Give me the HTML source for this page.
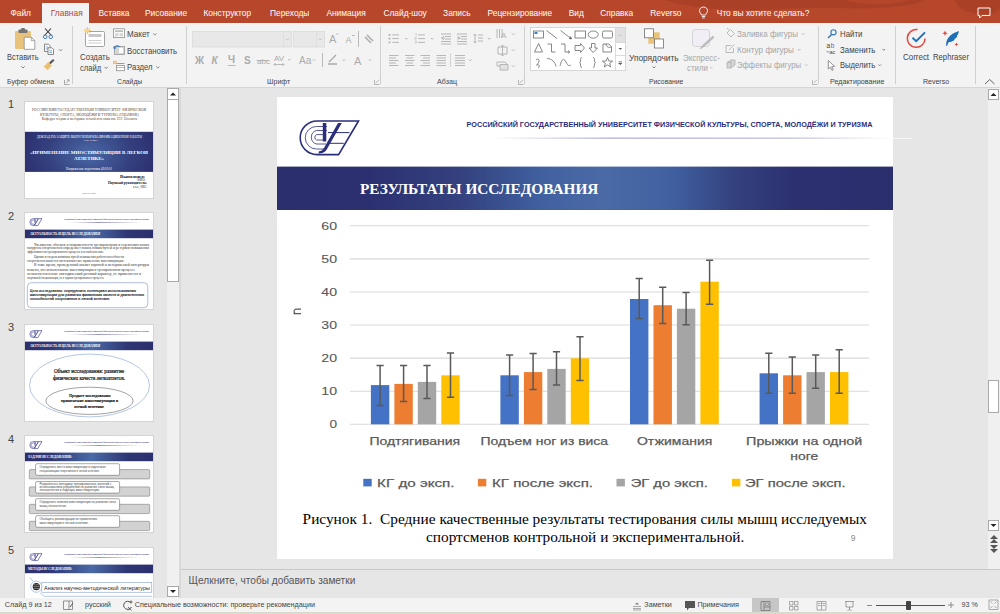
<!DOCTYPE html>
<html><head><meta charset="utf-8">
<style>
*{margin:0;padding:0;box-sizing:border-box}
html,body{width:1000px;height:614px;overflow:hidden;background:#e6e6e6;font-family:"Liberation Sans",sans-serif;position:relative}
.a{position:absolute;white-space:nowrap}
#tb{left:0;top:0;width:1000px;height:23px;background:#b7472a;overflow:hidden}
.tab{position:absolute;top:8px;font-size:8.4px;color:#fff;line-height:10px;white-space:nowrap}
#acttab{left:42px;top:3px;width:47px;height:21px;background:#f3f3f3}
#rbg{left:0;top:23px;width:1000px;height:65px;background:#f3f3f3;border-bottom:1px solid #d6d6d6}
#rb{left:0;top:0;width:1000px;height:88px}
.lbl{position:absolute;transform:scaleX(0.893);transform-origin:0 0;font-size:8.3px;color:#444;line-height:10px;white-space:nowrap}
.dis{color:#a6a6a6}
.sep{position:absolute;width:1px;background:#d4d4d4}
#thumbs{left:0;top:88px;width:167px;height:510px;overflow:hidden}
.th{box-shadow:0 0 0 1px #d4d4d4}
.thn{position:absolute;left:8px;font-size:11px;color:#444}
#slide{left:277px;top:97px;width:616px;height:462px;background:#fff;overflow:hidden}
#notes{left:181px;top:569px;width:819px;height:29px;border-top:1px solid #c8c8c8;background:#e6e6e6}
#sb{left:0;top:598px;width:1000px;height:16px;background:#f3f3f3}
.st{position:absolute;font-size:7.2px;color:#444;line-height:9px;white-space:nowrap}
</style></head><body>
<div id="rbg" class="a"></div>
<div id="tb" class="a">
<svg class="a" style="left:0;top:0" width="1000" height="23"><g fill="#9f3b24" opacity="0.5"><path d="M665 0 C690 8 730 12 780 9 C830 6 870 12 915 4 L925 0 Z"/><path d="M845 0 C860 5 890 6 910 0 Z" fill="#c05030" opacity="0.6"/><path d="M955 0 C958 8 965 14 985 14 C995 14 1000 10 1000 8 L1000 0 Z"/><path d="M600 23 C650 18 720 17 780 20 L790 23 Z" opacity="0.35"/></g></svg>
<div id="acttab" class="a"></div>
<div class="tab" style="left:10.4px">Файл</div>
<div class="tab" style="left:50.8px;color:#b7472a">Главная</div>
<div class="tab" style="left:98.4px">Вставка</div>
<div class="tab" style="left:145px">Рисование</div>
<div class="tab" style="left:203.4px">Конструктор</div>
<div class="tab" style="left:270px">Переходы</div>
<div class="tab" style="left:326.4px">Анимация</div>
<div class="tab" style="left:383.4px">Слайд-шоу</div>
<div class="tab" style="left:443.1px">Запись</div>
<div class="tab" style="left:487.5px">Рецензирование</div>
<div class="tab" style="left:568.7px">Вид</div>
<div class="tab" style="left:600.2px">Справка</div>
<div class="tab" style="left:650.3px">Reverso</div>
<svg class="a" style="left:698px;top:6px" width="11" height="13" viewBox="0 0 11 13"><path d="M5.5 1 C8 1 9.5 2.8 9.5 4.8 C9.5 6.5 8 7.5 7.5 9 L3.5 9 C3 7.5 1.5 6.5 1.5 4.8 C1.5 2.8 3 1 5.5 1 Z M3.8 10.5 H7.2 M4.3 12 H6.7" fill="none" stroke="#fff" stroke-width="0.9"/></svg>
<div class="tab" style="left:716.8px">Что вы хотите сделать?</div>
<svg class="a" style="left:977px;top:7px" width="14" height="12" viewBox="0 0 14 12"><path d="M1 1 H13 V8.5 H5 L2.5 11 V8.5 H1 Z" fill="none" stroke="#fff" stroke-width="1"/></svg>
</div>
<div id="rb" class="a">
<svg class="a" style="left:0;top:0" width="1000" height="88" viewBox="0 0 1000 88">
<g stroke="#d0d0d0" stroke-width="1"><path d="M72.5 26 V84 M186.5 26 V84 M380.5 26 V84 M524.5 26 V84 M818.5 26 V84 M895.5 26 V84 M975.5 26 V84"/></g>
<!-- paste -->
<rect x="15" y="31" width="16" height="18" rx="1.2" fill="#eac37b"/>
<rect x="18.5" y="29.5" width="9" height="3.5" rx="0.8" fill="#737373"/>
<rect x="21.2" y="28" width="3.6" height="2.5" rx="0.6" fill="#737373"/>
<path d="M24.2 37.2 H31.3 L34.8 40.7 V49.3 H24.2 Z" fill="#fff" stroke="#8a8a8a" stroke-width="0.8"/>
<path d="M31.3 37.2 V40.7 H34.8" fill="none" stroke="#8a8a8a" stroke-width="0.7"/>
<path d="M21.3 66.3 L23 68 L24.7 66.3" fill="none" stroke="#666" stroke-width="0.8"/>
<!-- scissors -->
<path d="M45 28.5 L51.5 35.5 M51 28.5 L44.5 35.5" stroke="#3a3a3a" stroke-width="1.1"/>
<circle cx="45.2" cy="36.8" r="1.8" fill="none" stroke="#3f7fc1" stroke-width="1"/>
<circle cx="50.8" cy="36.8" r="1.8" fill="none" stroke="#3f7fc1" stroke-width="1"/>
<!-- copy -->
<path d="M44.5 44.2 H48.5 L50 45.7 V51.5 H44.5 Z" fill="#fff" stroke="#6a6a6a" stroke-width="0.8"/>
<path d="M48 47.8 H52 L53.5 49.3 V54.5 H48 Z" fill="#fff" stroke="#6a6a6a" stroke-width="0.8"/>
<path d="M45.8 47 H48 M45.8 49 H48 M49.3 50.8 H52 M49.3 52.6 H52" stroke="#3f7fc1" stroke-width="0.7"/>
<path d="M59 49.3 L60.6 50.9 L62.2 49.3" fill="none" stroke="#666" stroke-width="0.8"/>
<!-- format painter -->
<path d="M43.6 66.5 L48.3 62 L52 65.7 L47.5 70.2 Z" fill="#eac37b"/>
<path d="M47 67.2 L49.5 64.7" stroke="#c9a060" stroke-width="0.6"/>
<path d="M49.8 63.4 L53.8 59.8" stroke="#5a5a5a" stroke-width="2.2"/>
<!-- launcher clipboard -->
<path d="M64.5 80 V84.5 H69.5 M66 82.8 L69 79.8 M67 79.8 H69 V81.8" fill="none" stroke="#8a8a8a" stroke-width="0.7"/>
<!-- new slide -->
<rect x="85.5" y="31.5" width="19" height="15" rx="1.2" fill="#fff" stroke="#9a9a9a" stroke-width="0.9"/>
<rect x="88.5" y="34" width="13" height="3" fill="#c8c8c8"/>
<path d="M88.5 40.5 H101.5 M88.5 43 H101.5" stroke="#b8b8b8" stroke-width="0.7"/>
<g stroke="#f0b945" stroke-width="0.9"><path d="M87.5 27.2 V34.2 M84 30.7 H91 M85 28.2 L90 33.2 M90 28.2 L85 33.2"/></g>
<circle cx="87.5" cy="30.7" r="1.8" fill="#f7d581"/>
<path d="M104.5 66.8 L106.2 68.5 L107.9 66.8" fill="none" stroke="#666" stroke-width="0.8"/>
<!-- layout -->
<rect x="113.5" y="28.8" width="11" height="8.8" fill="#fff" stroke="#8f8f8f" stroke-width="0.8"/>
<rect x="115" y="30.3" width="8" height="1.8" fill="#bdbdbd"/>
<rect x="115" y="33.3" width="3.5" height="3" fill="#d5d5d5"/><rect x="119.5" y="33.3" width="3.5" height="3" fill="#d5d5d5"/>
<path d="M153.2 33.5 L154.8 35.1 L156.4 33.5" fill="none" stroke="#666" stroke-width="0.8"/>
<!-- reset -->
<rect x="114.5" y="46.5" width="10" height="8" fill="#d6d6d6" stroke="#9a9a9a" stroke-width="0.8"/>
<rect x="119" y="48" width="4" height="5" fill="#fff"/>
<path d="M114 48.5 C115 45.5 118 45 119.5 47" fill="none" stroke="#3f7fc1" stroke-width="1.2"/>
<path d="M113 46.5 L114.2 49.5 L116.5 47.8 Z" fill="#3f7fc1"/>
<!-- section -->
<rect x="113.6" y="61.2" width="2.6" height="2.6" fill="#f5d39a" stroke="#e8a860" stroke-width="0.6"/>
<path d="M116.5 63.5 H124.5" stroke="#e8824a" stroke-width="1"/>
<rect x="116.5" y="65.5" width="8" height="5.2" fill="#fff" stroke="#8f8f8f" stroke-width="0.8"/>
<path d="M116.5 67.5 H124.5" stroke="#8f8f8f" stroke-width="0.6"/>
<path d="M156.2 66.5 L157.8 68.1 L159.4 66.5" fill="none" stroke="#666" stroke-width="0.8"/>
<!-- font group (disabled) -->
<rect x="192.5" y="31.5" width="99" height="15.5" fill="#e8e8e8" stroke="#dadada" stroke-width="0.8"/>
<path d="M283.5 31.5 V47" stroke="#dadada" stroke-width="0.8"/>
<path d="M286.2 38.7 L287.5 40 L288.8 38.7" fill="none" stroke="#b0b0b0" stroke-width="0.7"/>
<rect x="293.5" y="31.5" width="31" height="15.5" fill="#e8e8e8" stroke="#dadada" stroke-width="0.8"/>
<path d="M316.5 31.5 V47" stroke="#dadada" stroke-width="0.8"/>
<path d="M319 38.7 L320.3 40 L321.6 38.7" fill="none" stroke="#b0b0b0" stroke-width="0.7"/>
<g fill="#ababab" font-family="Liberation Sans" >
<text x="329" y="43" font-size="11">A</text><text x="336" y="37" font-size="5">^</text>
<text x="345.5" y="43" font-size="9">A</text><path d="M352 35.5 H355" stroke="#ababab" stroke-width="0.8"/>
<text x="195" y="64" font-size="10" font-weight="700">Ж</text>
<text x="211.5" y="64" font-size="10" font-weight="700" font-style="italic">К</text>
<text x="228" y="63" font-size="10" font-weight="700">Ч</text>
<text x="244" y="64" font-size="10" font-weight="700">S</text>
<text x="257" y="63.5" font-size="8">abc</text>
<text x="274" y="61" font-size="8">AV</text>
<text x="299" y="64" font-size="10">Aa</text>
<text x="354" y="64.5" font-size="11">A</text>
</g>
<g stroke="#ababab" fill="none" stroke-width="0.8">
<path d="M227.8 65.5 H235.5"/>
<path d="M256.5 60.5 H269"/>
<path d="M274 64.5 H284 M275.5 63 L274 64.5 L275.5 66 M282.5 63 L284 64.5 L282.5 66"/>
<path d="M288 59 L289.3 60.3 L290.6 59 M312.8 59.5 L314.1 60.8 L315.4 59.5 M342.7 59.5 L344 60.8 L345.3 59.5 M368.7 59.5 L370 60.8 L371.3 59.5"/>
<path d="M358.5 31 V47 M322.5 53 V67"/>
<path d="M365 37 L371 43 M367 35 L373 41" stroke-width="1.5"/>
<path d="M336 55 L329 62 M328 64 H337" stroke-width="1.4"/>
<path d="M374.5 80 V84.5 H379.5 M376 82.8 L379 79.8" stroke="#9a9a9a" stroke-width="0.7"/>
</g>
<!-- paragraph (disabled) -->
<g stroke="#b0b0b0" fill="none" stroke-width="0.9">
<path d="M392.3 34.9 H399 M392.3 38.6 H399 M392.3 42.4 H399"/><path d="M388.6 34 h1.8 v1.8 h-1.8 Z M388.6 37.7 h1.8 v1.8 h-1.8 Z M388.6 41.5 h1.8 v1.8 h-1.8 Z" fill="#b0b0b0" stroke="none"/>
<path d="M418.2 34.9 H425 M418.2 38.6 H425 M418.2 42.4 H425"/><path d="M415 33.8 h1.4 v1.8 M414.8 37.2 h1.6 v1 h-1.6 v1 h1.6 M414.8 41 h1.6 v1 h-1.2 M414.8 43 h1.6 v-1" stroke-width="0.5"/>
<path d="M441 34 H451 M445 36.5 H451 M445 39 H451 M441 41.5 H451 M441 44 H451 M441.5 38 L444 36 M441.5 38 L444 40 M441.5 38 H445"/>
<path d="M457 34 H467 M461 36.5 H467 M461 39 H467 M457 41.5 H467 M457 44 H467 M460 38 L457.5 36 M460 38 L457.5 40 M457 38 H460.5"/>
<path d="M478 35 H483 M478 38 H483 M478 41 H483 M475 34 V43 M473.5 35.5 L475 34 L476.5 35.5 M473.5 41.5 L475 43 L476.5 41.5"/>
<path d="M405 38 L406.3 39.3 L407.6 38 M431 38 L432.3 39.3 L433.6 38 M488 38 L489.3 39.3 L490.6 38"/>
<path d="M389 55.5 H398.5 M389 58 H396 M389 60.5 H398.5 M389 63 H396 M389 65.5 H398.5"/>
<path d="M405 55.5 H414.5 M406.5 58 H413 M405 60.5 H414.5 M406.5 63 H413 M405 65.5 H414.5"/>
<path d="M420.5 55.5 H430 M423 58 H430 M420.5 60.5 H430 M423 63 H430 M420.5 65.5 H430"/>
<path d="M436.5 55.5 H446 M436.5 58 H446 M436.5 60.5 H446 M436.5 63 H446 M436.5 65.5 H446"/>
<path d="M450.5 53 V67" stroke="#d0d0d0"/>
<path d="M455 55.5 H465 M455 58 H465 M455 60.5 H465 M455 63 H465 M455 65.5 H465"/>
<path d="M469 59.5 L470.3 60.8 L471.6 59.5"/>
<path d="M497 29 V38 M499.5 29 V38 M502 29 V38"/>
<path d="M498 47 H507 V54 H498 Z M502.5 45 V56 M501 46.5 L502.5 45 L504 46.5 M501 54.5 L502.5 56 L504 54.5"/>
<path d="M497 62 H505 L507 64 L505 66 H497 Z"/>
<path d="M500 64.5 H508 V70 H500 Z" fill="#e2e2e2"/>
<path d="M512 33.5 L513.3 34.8 L514.6 33.5 M512 49.5 L513.3 50.8 L514.6 49.5 M512 65.5 L513.3 66.8 L514.6 65.5"/>
<path d="M518.5 80 V84.5 H523.5 M520 82.8 L523 79.8" stroke="#9a9a9a" stroke-width="0.7"/>
</g>
<text x="501" y="38" font-size="8" fill="#b0b0b0" font-family="Liberation Sans">A</text>

<!-- drawing gallery -->
<rect x="530.5" y="27.5" width="95" height="43" fill="#fff" stroke="#d2d2d2" stroke-width="0.9"/>
<rect x="615.5" y="28" width="9.5" height="14.5" fill="#e1e1e1"/>
<path d="M615.5 27.5 V70.5 M615.5 42.5 H625.5 M615.5 55.5 H625.5" stroke="#d2d2d2" stroke-width="0.8"/>
<path d="M618.8 36 L620.3 34.5 L621.8 36 Z" fill="#c0c0c0"/>
<path d="M618.5 48 L620.3 49.8 L622.1 48 Z" fill="#555"/>
<path d="M618.5 61.5 H622.1 M618.5 63 L620.3 64.8 L622.1 63 Z" fill="#555" stroke="#555" stroke-width="0.5"/>
<g fill="none" stroke="#6a6a6a" stroke-width="0.8">
<rect x="533.5" y="31" width="10" height="7"/>
<path d="M546.5 30.5 L557 38.5 M560.5 30.5 L571 38.5"/>
<path d="M569 38.5 L571.5 39 L570.5 36.5" fill="#6a6a6a"/>
<rect x="575" y="31" width="10.5" height="7"/>
<ellipse cx="593.2" cy="34.6" rx="5" ry="3.6"/>
<rect x="602.5" y="31" width="10" height="7" rx="1.5"/>
<path d="M538.6 43.5 L534.5 52 H542.5 Z"/>
<path d="M547.5 44 H551.5 V52 H555.5"/>
<path d="M561 44 H565 V52 H569.5 M568 50.5 L569.8 52 L568 53.5"/>
<path d="M575 45.5 H580.5 V43.5 L584.5 48 L580.5 52.5 V50.5 H575 Z"/>
<path d="M591.5 43.5 H595 V48 H597.5 L593.2 52.5 L589 48 H591.5 Z"/>
<path d="M603 44 H609 L611.5 47 V52 H603 Z M606 44 C606 47 609 48 611.5 47"/>
<path d="M536 60 C540 57 540 63 536.5 65 C540 64 540 67 538 68"/>
<path d="M547 58.5 C552 58.5 555 62 556 66.5"/>
<path d="M560 66 C562 58 564 58 566 62 C568 66 569 66 571 65"/>
<path d="M582 57.5 C580.5 57.5 580.5 59 580.5 61 C580.5 62 580 62.5 579.5 62.5 C580 62.5 580.5 63 580.5 64 C580.5 66 580.5 67.5 582 67.5"/>
<path d="M593 57.5 C594.5 57.5 594.5 59 594.5 61 C594.5 62 595 62.5 595.5 62.5 C595 62.5 594.5 63 594.5 64 C594.5 66 594.5 67.5 593 67.5"/>
<path d="M607.5 57.5 L608.9 61 L612.6 61.1 L609.7 63.4 L610.7 67 L607.5 64.9 L604.3 67 L605.3 63.4 L602.4 61.1 L606.1 61 Z"/>
</g>
<rect x="534.5" y="32" width="3" height="2" fill="#3f7fc1"/>
<!-- arrange -->
<rect x="648.3" y="32.3" width="11.4" height="11.4" fill="#eac37b"/>
<rect x="644.5" y="28.8" width="9" height="9" fill="#fff" stroke="#707070" stroke-width="0.8"/>
<rect x="654.5" y="39" width="9" height="9" fill="#fff" stroke="#707070" stroke-width="0.8"/>
<path d="M652.5 66.5 L654 68 L655.5 66.5" fill="none" stroke="#666" stroke-width="0.8"/>
<!-- express styles -->
<rect x="692.5" y="29.5" width="17" height="17" rx="3" fill="#f2eef5" stroke="#cfcfcf" stroke-width="0.9"/>
<path d="M713 36 L703 45 L700 49 L704 46.5 L714 37.5 Z" fill="#bdbdbd" stroke="#a8a8a8" stroke-width="0.5"/>
<path d="M709.8 67 L711.1 68.3 L712.4 67" fill="none" stroke="#b0b0b0" stroke-width="0.7"/>
<!-- fill outline effects -->
<g fill="none" stroke="#b4b4b4" stroke-width="0.9">
<path d="M727 33 L730.5 29.5 L734.5 33.5 L731 37 Z M729 30 L727 28"/>
<path d="M726 45.5 H731.5 M726 45.5 V52.5 H733.5 V48 M729 50 L734.5 44.5"/>
<path d="M727 62.5 L731 60 H735 V65 L731 68 H727 Z M731 60 V68 M727 62.5 H731" fill="#d5d5d5"/>
<path d="M802 33.5 L803.3 34.8 L804.6 33.5 M798 49 L799.3 50.3 L800.6 49 M805 64.5 L806.3 65.8 L807.6 64.5"/>
<path d="M812.5 80 V84.5 H817.5 M814 82.8 L817 79.8" stroke="#9a9a9a" stroke-width="0.7"/>
</g>
<!-- find replace select -->
<circle cx="833.5" cy="32.3" r="2.6" fill="none" stroke="#2e75b6" stroke-width="1.1"/>
<path d="M831.6 34.4 L828 38" stroke="#2e75b6" stroke-width="1.4"/>
<text x="826.5" y="48" font-size="6.5" font-family="Liberation Sans" fill="#444">a</text>
<text x="830.8" y="47.5" font-size="6.5" font-family="Liberation Sans" fill="#7a5ab0">b</text>
<text x="829.5" y="53.5" font-size="5.5" font-family="Liberation Sans" fill="#444">ac</text>
<path d="M826.5 51 C827.5 52.5 828.5 52.5 829.5 51.5" fill="none" stroke="#2e75b6" stroke-width="0.7"/>
<path d="M828.3 60.5 V69 L830.4 67.2 L832 70.3 L833.2 69.7 L831.7 66.7 L834.6 66.3 Z" fill="#fff" stroke="#666" stroke-width="0.7"/>
<path d="M882.5 49 L883.8 50.3 L885.1 49 M878.5 64.5 L879.8 65.8 L881.1 64.5" fill="none" stroke="#666" stroke-width="0.8"/>
<!-- reverso -->
<path d="M917.5 29.6 A8.9 8.9 0 1 0 925.1 38.6" fill="none" stroke="#e1473d" stroke-width="1.5"/>
<path d="M912.5 37.8 L916.2 41.2 L925 32.3" fill="none" stroke="#1f6fb6" stroke-width="1.9"/>
<path d="M946.3 46 C945.5 41 948 34.5 958.8 31 C958.6 33 958 34.5 957 35.5 L957.3 36.2 C956.5 37.5 955.5 38.5 954.5 39 L954.6 39.8 C953 41.2 951 42 948.5 42.3 L947 46 Z" fill="#1f6fb6"/>
<path d="M945 30.5 L945.8 32.5 L947.8 33.3 L945.8 34.1 L945 36 L944.2 34.1 L942.2 33.3 L944.2 32.5 Z" fill="#e1473d"/>
<path d="M956.4 42.4 L957 43.8 L958.4 44.4 L957 45 L956.4 46.4 L955.8 45 L954.4 44.4 L955.8 43.8 Z" fill="#e1473d"/>
<path d="M985 84 L989.7 79.5 L994.5 84" fill="none" stroke="#555" stroke-width="0.9"/>
</svg>

<div class="lbl" style="left:7.4px;top:52.0px;font-size:8.34px">Вставить</div>
<div class="lbl" style="left:6.8px;top:77.0px;font-size:7.78px">Буфер обмена</div>
<div class="lbl" style="left:79.8px;top:52.0px;font-size:8.78px">Создать</div>
<div class="lbl" style="left:80.2px;top:62.5px;font-size:8.53px">слайд</div>
<div class="lbl" style="left:126.6px;top:29.0px;font-size:9.03px">Макет</div>
<div class="lbl" style="left:126.6px;top:45.8px;font-size:8.78px">Восстановить</div>
<div class="lbl" style="left:126.6px;top:62.0px;font-size:8.68px">Раздел</div>
<div class="lbl" style="left:116.8px;top:77.0px;font-size:7.58px">Слайды</div>
<div class="lbl" style="left:266.6px;top:77.0px;font-size:7.90px">Шрифт</div>
<div class="lbl" style="left:437px;top:77.0px;font-size:7.99px">Абзац</div>
<div class="lbl" style="left:629.4px;top:52.6px;font-size:9.34px">Упорядочить</div>
<div class="lbl dis" style="left:683px;top:52.6px;font-size:8.90px">Экспресс-</div>
<div class="lbl dis" style="left:687px;top:63.0px;font-size:8.85px">стили</div>
<div class="lbl" style="left:648.6px;top:77.0px;font-size:7.65px">Рисование</div>
<div class="lbl dis" style="left:737px;top:29.0px;font-size:8.95px">Заливка фигуры</div>
<div class="lbl dis" style="left:737px;top:44.6px;font-size:9.13px">Контур фигуры</div>
<div class="lbl dis" style="left:737px;top:60.0px;font-size:8.60px">Эффекты фигуры</div>
<div class="lbl" style="left:839.6px;top:29.0px;font-size:8.79px">Найти</div>
<div class="lbl" style="left:839.6px;top:44.6px;font-size:8.83px">Заменить</div>
<div class="lbl" style="left:839.6px;top:60.0px;font-size:8.59px">Выделить</div>
<div class="lbl" style="left:830px;top:77.0px;font-size:8.00px">Редактирование</div>
<div class="lbl" style="left:902.8px;top:52.0px;font-size:8.92px">Correct</div>
<div class="lbl" style="left:932.5px;top:52.0px;font-size:8.64px">Rephraser</div>
<div class="lbl" style="left:922.6px;top:77.0px;font-size:7.85px">Reverso</div>
</div>
<div id="thumbs" class="a">
<div class="thn" style="top:10.0px">1</div>
<div class="thn" style="top:121.5px">2</div>
<div class="thn" style="top:233.0px">3</div>
<div class="thn" style="top:344.5px">4</div>
<div class="thn" style="top:456.0px">5</div>
<svg class="a th" style="left:25px;top:13.7px" width="128" height="96" viewBox="0 0 128 96">
<defs><linearGradient id="tb0" x1="0" x2="1"><stop offset="0" stop-color="#2c2f6e"/><stop offset="0.2" stop-color="#2f3674"/><stop offset="0.52" stop-color="#4a6aa6"/><stop offset="0.8" stop-color="#2f3674"/><stop offset="1" stop-color="#2c2f6e"/></linearGradient><linearGradient id="thl0" x1="0" x2="1"><stop offset="0" stop-color="#6a6ab0" stop-opacity="0"/><stop offset="0.4" stop-color="#6a6ab0"/><stop offset="1" stop-color="#6a6ab0" stop-opacity="0"/></linearGradient></defs>
<rect x="0" y="0" width="128" height="96" fill="#fff"/>
<text x="7.00" y="9.40" font-family="Liberation Serif" font-size="3.4" font-weight="400" fill="#5b4a3a" opacity="1.0" textLength="114.00" lengthAdjust="spacingAndGlyphs">РОССИЙСКИЙ ГОСУДАРСТВЕННЫЙ УНИВЕРСИТЕТ ФИЗИЧЕСКОЙ</text>
<text x="15.00" y="13.50" font-family="Liberation Serif" font-size="3.4" font-weight="400" fill="#5b4a3a" opacity="1.0" textLength="98.60" lengthAdjust="spacingAndGlyphs">КУЛЬТУРЫ, СПОРТА, МОЛОДЁЖИ И ТУРИЗМА (ГЦОЛИФК)</text>
<text x="16.70" y="17.80" font-family="Liberation Serif" font-size="3.4" font-weight="400" fill="#5b4a3a" opacity="1.0" textLength="95.30" lengthAdjust="spacingAndGlyphs">Кафедра теории и методики легкой атлетики им. Н.Г. Озолина</text>
<defs><radialGradient id="rg0" cx="0.5" cy="0.55" r="0.55" gradientTransform="translate(0.5,0.55) scale(1,2.2) translate(-0.5,-0.55)"><stop offset="0" stop-color="#4a68a6"/><stop offset="0.6" stop-color="#34407e"/><stop offset="1" stop-color="#2c2f6e"/></radialGradient></defs>
<rect x="0" y="29.80" width="128" height="40.1" fill="url(#rg0)"/>
<text x="12.00" y="35.90" font-family="Liberation Serif" font-size="3" font-weight="400" fill="#fff" opacity="1.0" textLength="105.00" lengthAdjust="spacingAndGlyphs">ДОКЛАД ПО ЗАЩИТЕ ВЫПУСКНОЙ КВАЛИФИКАЦИОННОЙ РАБОТЫ</text>
<text x="59.00" y="39.30" font-family="Liberation Serif" font-size="2.8" font-weight="400" fill="#fff" opacity="1.0" textLength="14.00" lengthAdjust="spacingAndGlyphs">На тему:</text>
<text x="5.00" y="51.90" font-family="Liberation Serif" font-size="4.8" font-weight="700" fill="#fff" opacity="1.0" textLength="118.00" lengthAdjust="spacingAndGlyphs">«ПРИМЕНЕНИЕ МИОСТИМУЛЯЦИИ В ЛЕГКОЙ</text>
<text x="49.00" y="57.70" font-family="Liberation Serif" font-size="4.8" font-weight="700" fill="#fff" opacity="1.0" textLength="30.00" lengthAdjust="spacingAndGlyphs">АТЛЕТИКЕ»</text>
<text x="41.00" y="67.60" font-family="Liberation Serif" font-size="3" font-weight="400" fill="#fff" opacity="1.0" textLength="46.00" lengthAdjust="spacingAndGlyphs">Направление подготовки 49.03.01</text>
<text x="95.00" y="75.70" font-family="Liberation Serif" font-size="3.4" font-weight="700" fill="#111" opacity="1.0" textLength="25.00" lengthAdjust="spacingAndGlyphs">Выполнил:</text>
<text x="112.00" y="78.80" font-family="Liberation Serif" font-size="3" font-weight="400" fill="#333" opacity="1.0" textLength="8.00" lengthAdjust="spacingAndGlyphs">ФИО</text>
<text x="83.00" y="82.10" font-family="Liberation Serif" font-size="3.4" font-weight="700" fill="#111" opacity="1.0" textLength="39.00" lengthAdjust="spacingAndGlyphs">Научный руководитель:</text>
<text x="108.00" y="85.50" font-family="Liberation Serif" font-size="3" font-weight="400" fill="#333" opacity="1.0" textLength="13.00" lengthAdjust="spacingAndGlyphs">к.п.н., ФИО</text>
<text x="57.00" y="92.30" font-family="Liberation Serif" font-size="2.6" font-weight="400" fill="#777" opacity="1.0" textLength="14.00" lengthAdjust="spacingAndGlyphs">Москва 2022</text>
</svg>
<svg class="a th" style="left:25px;top:124.7px" width="128" height="96" viewBox="0 0 128 96">
<defs><linearGradient id="tb1" x1="0" x2="1"><stop offset="0" stop-color="#2c2f6e"/><stop offset="0.2" stop-color="#2f3674"/><stop offset="0.52" stop-color="#4a6aa6"/><stop offset="0.8" stop-color="#2f3674"/><stop offset="1" stop-color="#2c2f6e"/></linearGradient><linearGradient id="thl1" x1="0" x2="1"><stop offset="0" stop-color="#6a6ab0" stop-opacity="0"/><stop offset="0.4" stop-color="#6a6ab0"/><stop offset="1" stop-color="#6a6ab0" stop-opacity="0"/></linearGradient></defs>
<rect x="0" y="0" width="128" height="96" fill="#fff"/>
<g transform="translate(4.6,5.6) scale(0.2078)"><g transform="translate(-299,-121)"><g fill="none" stroke="#3b3e8a"><path d="M317 121 H358.5 L338.6 154.6 H317 A16.8 16.8 0 0 1 317 121 Z" stroke-width="3.2"/><path d="M327 128 H316.5 A10 10 0 0 0 316.5 148 H326" stroke-width="2.4"/></g><path d="M322.8 123 H327.3 V141.5 H322.8 Z M338 123 L342.8 123 L327 149 C325 152.5 322 153.5 318.5 153.5 L319 151.2 C321.5 151 323 150 324.3 147.5 Z" fill="#3b3e8a"/></g></g>
<text x="39.00" y="7.00" font-family="Liberation Sans" font-size="1.8" font-weight="700" fill="#2b2e7a" opacity="1.0" textLength="85.00" lengthAdjust="spacingAndGlyphs">РОССИЙСКИЙ ГОСУДАРСТВЕННЫЙ УНИВЕРСИТЕТ ФИЗИЧЕСКОЙ КУЛЬТУРЫ, СПОРТА, МОЛОДЁЖИ И ТУРИЗМА</text>
<rect x="45" y="9.0" width="72" height="0.7" fill="url(#thl1)"/>
<rect x="0" y="16.60" width="128" height="8.60" fill="url(#tb1)"/>
<text x="5.00" y="21.90" font-family="Liberation Serif" font-size="3.3" font-weight="700" fill="#fff" opacity="1.0" textLength="70.00" lengthAdjust="spacingAndGlyphs">АКТУАЛЬНОСТЬ И ЦЕЛЬ ИССЛЕДОВАНИЯ</text>
<text x="9.00" y="32.60" font-family="Liberation Serif" font-size="3.1" font-weight="400" fill="#555" opacity="1.0" stroke="#555" stroke-width="0.05" textLength="115.00" lengthAdjust="spacingAndGlyphs">Увеличение объемов и напряженности тренировочных и соревновательных</text>
<text x="2.00" y="36.40" font-family="Liberation Serif" font-size="3.1" font-weight="400" fill="#555" opacity="1.0" stroke="#555" stroke-width="0.05" textLength="122.00" lengthAdjust="spacingAndGlyphs">нагрузок спортсменов определяет поиск новых путей и резервов повышения</text>
<text x="2.00" y="40.30" font-family="Liberation Serif" font-size="3.1" font-weight="400" fill="#555" opacity="1.0" stroke="#555" stroke-width="0.05" textLength="77.00" lengthAdjust="spacingAndGlyphs">эффективности тренировочного процесса в легкой атлетике.</text>
<text x="9.00" y="45.40" font-family="Liberation Serif" font-size="3.1" font-weight="400" fill="#555" opacity="1.0" stroke="#555" stroke-width="0.05" textLength="90.00" lengthAdjust="spacingAndGlyphs">Одним из перспективных путей повышения работоспособности</text>
<text x="2.00" y="49.10" font-family="Liberation Serif" font-size="3.1" font-weight="400" fill="#555" opacity="1.0" stroke="#555" stroke-width="0.05" textLength="97.00" lengthAdjust="spacingAndGlyphs">спортсменов является систематическое применение миостимуляции.</text>
<text x="9.00" y="53.30" font-family="Liberation Serif" font-size="3.1" font-weight="400" fill="#555" opacity="1.0" stroke="#555" stroke-width="0.05" textLength="115.00" lengthAdjust="spacingAndGlyphs">В тоже время, проведенный анализ научной и методической литературы</text>
<text x="2.00" y="57.50" font-family="Liberation Serif" font-size="3.1" font-weight="400" fill="#555" opacity="1.0" stroke="#555" stroke-width="0.05" textLength="108.00" lengthAdjust="spacingAndGlyphs">показал, что использование миостимуляции в тренировочном процессе</text>
<text x="2.00" y="61.70" font-family="Liberation Serif" font-size="3.1" font-weight="400" fill="#555" opacity="1.0" stroke="#555" stroke-width="0.05" textLength="114.00" lengthAdjust="spacingAndGlyphs">легкоатлетов носит эпизодический разовый характер, не применяется в</text>
<text x="2.00" y="66.00" font-family="Liberation Serif" font-size="3.1" font-weight="400" fill="#555" opacity="1.0" stroke="#555" stroke-width="0.05" textLength="77.00" lengthAdjust="spacingAndGlyphs">спортивной специализации, не в задачах тренировочного процесса.</text>
<rect x="2.30" y="69.70" width="120.5" height="25" rx="4" fill="#fff" stroke="#7a90c0" stroke-width="0.6"/>
<text x="5.00" y="78.80" font-family="Liberation Sans" font-size="3.2" font-weight="700" fill="#111" opacity="1.0" textLength="33.00" lengthAdjust="spacingAndGlyphs">Цель исследования:</text>
<text x="39.00" y="78.80" font-family="Liberation Sans" font-size="3.2" font-weight="400" fill="#222" opacity="1.0" stroke="#222" stroke-width="0.12" textLength="72.00" lengthAdjust="spacingAndGlyphs">определить потенциал использования</text>
<text x="5.00" y="82.80" font-family="Liberation Sans" font-size="3.2" font-weight="400" fill="#222" opacity="1.0" stroke="#222" stroke-width="0.12" textLength="114.00" lengthAdjust="spacingAndGlyphs">миостимуляции для развития физических качеств и двигательных</text>
<text x="5.00" y="86.70" font-family="Liberation Sans" font-size="3.2" font-weight="400" fill="#222" opacity="1.0" stroke="#222" stroke-width="0.12" textLength="80.00" lengthAdjust="spacingAndGlyphs">способностей спортсменов в легкой атлетике.</text>
</svg>
<svg class="a th" style="left:25px;top:236.7px" width="128" height="96" viewBox="0 0 128 96">
<defs><linearGradient id="tb2" x1="0" x2="1"><stop offset="0" stop-color="#2c2f6e"/><stop offset="0.2" stop-color="#2f3674"/><stop offset="0.52" stop-color="#4a6aa6"/><stop offset="0.8" stop-color="#2f3674"/><stop offset="1" stop-color="#2c2f6e"/></linearGradient><linearGradient id="thl2" x1="0" x2="1"><stop offset="0" stop-color="#6a6ab0" stop-opacity="0"/><stop offset="0.4" stop-color="#6a6ab0"/><stop offset="1" stop-color="#6a6ab0" stop-opacity="0"/></linearGradient></defs>
<rect x="0" y="0" width="128" height="96" fill="#fff"/>
<g transform="translate(4.6,5.6) scale(0.2078)"><g transform="translate(-299,-121)"><g fill="none" stroke="#3b3e8a"><path d="M317 121 H358.5 L338.6 154.6 H317 A16.8 16.8 0 0 1 317 121 Z" stroke-width="3.2"/><path d="M327 128 H316.5 A10 10 0 0 0 316.5 148 H326" stroke-width="2.4"/></g><path d="M322.8 123 H327.3 V141.5 H322.8 Z M338 123 L342.8 123 L327 149 C325 152.5 322 153.5 318.5 153.5 L319 151.2 C321.5 151 323 150 324.3 147.5 Z" fill="#3b3e8a"/></g></g>
<text x="39.00" y="7.00" font-family="Liberation Sans" font-size="1.8" font-weight="700" fill="#2b2e7a" opacity="1.0" textLength="85.00" lengthAdjust="spacingAndGlyphs">РОССИЙСКИЙ ГОСУДАРСТВЕННЫЙ УНИВЕРСИТЕТ ФИЗИЧЕСКОЙ КУЛЬТУРЫ, СПОРТА, МОЛОДЁЖИ И ТУРИЗМА</text>
<rect x="45" y="9.0" width="72" height="0.7" fill="url(#thl2)"/>
<rect x="0" y="16.60" width="128" height="8.60" fill="url(#tb2)"/>
<text x="5.00" y="21.90" font-family="Liberation Serif" font-size="3.3" font-weight="700" fill="#fff" opacity="1.0" textLength="70.00" lengthAdjust="spacingAndGlyphs">АКТУАЛЬНОСТЬ И ЦЕЛЬ ИССЛЕДОВАНИЯ</text>
<ellipse cx="64.5" cy="60.50" rx="60" ry="31.4" fill="#fff" stroke="#6b8cc8" stroke-width="0.5"/>
<text x="29.00" y="47.80" font-family="Liberation Serif" font-size="5.4" font-weight="400" fill="#111" opacity="1.0" stroke="#111" stroke-width="0.2" textLength="70.00" lengthAdjust="spacingAndGlyphs">Объект исследования: развитие</text>
<text x="28.00" y="54.60" font-family="Liberation Serif" font-size="5.4" font-weight="400" fill="#111" opacity="1.0" stroke="#111" stroke-width="0.2" textLength="72.00" lengthAdjust="spacingAndGlyphs">физических качеств легкоатлетов.</text>
<ellipse cx="64.5" cy="75.80" rx="43.6" ry="13.6" fill="#fff" stroke="#444" stroke-width="0.5"/>
<text x="44.00" y="72.00" font-family="Liberation Serif" font-size="4.8" font-weight="400" fill="#111" opacity="1.0" stroke="#111" stroke-width="0.2" textLength="42.00" lengthAdjust="spacingAndGlyphs">Предмет исследования:</text>
<text x="36.00" y="77.30" font-family="Liberation Serif" font-size="4.8" font-weight="400" fill="#111" opacity="1.0" stroke="#111" stroke-width="0.2" textLength="57.00" lengthAdjust="spacingAndGlyphs">применение миостимуляции в</text>
<text x="49.00" y="82.50" font-family="Liberation Serif" font-size="4.8" font-weight="400" fill="#111" opacity="1.0" stroke="#111" stroke-width="0.2" textLength="30.00" lengthAdjust="spacingAndGlyphs">легкой атлетике</text>
</svg>
<svg class="a th" style="left:25px;top:347.7px" width="128" height="96" viewBox="0 0 128 96">
<defs><linearGradient id="tb3" x1="0" x2="1"><stop offset="0" stop-color="#2c2f6e"/><stop offset="0.2" stop-color="#2f3674"/><stop offset="0.52" stop-color="#4a6aa6"/><stop offset="0.8" stop-color="#2f3674"/><stop offset="1" stop-color="#2c2f6e"/></linearGradient><linearGradient id="thl3" x1="0" x2="1"><stop offset="0" stop-color="#6a6ab0" stop-opacity="0"/><stop offset="0.4" stop-color="#6a6ab0"/><stop offset="1" stop-color="#6a6ab0" stop-opacity="0"/></linearGradient></defs>
<rect x="0" y="0" width="128" height="96" fill="#fff"/>
<g transform="translate(4.6,5.6) scale(0.2078)"><g transform="translate(-299,-121)"><g fill="none" stroke="#3b3e8a"><path d="M317 121 H358.5 L338.6 154.6 H317 A16.8 16.8 0 0 1 317 121 Z" stroke-width="3.2"/><path d="M327 128 H316.5 A10 10 0 0 0 316.5 148 H326" stroke-width="2.4"/></g><path d="M322.8 123 H327.3 V141.5 H322.8 Z M338 123 L342.8 123 L327 149 C325 152.5 322 153.5 318.5 153.5 L319 151.2 C321.5 151 323 150 324.3 147.5 Z" fill="#3b3e8a"/></g></g>
<text x="39.00" y="7.00" font-family="Liberation Sans" font-size="1.8" font-weight="700" fill="#2b2e7a" opacity="1.0" textLength="85.00" lengthAdjust="spacingAndGlyphs">РОССИЙСКИЙ ГОСУДАРСТВЕННЫЙ УНИВЕРСИТЕТ ФИЗИЧЕСКОЙ КУЛЬТУРЫ, СПОРТА, МОЛОДЁЖИ И ТУРИЗМА</text>
<rect x="45" y="9.0" width="72" height="0.7" fill="url(#thl3)"/>
<rect x="0" y="16.60" width="128" height="8.60" fill="url(#tb3)"/>
<text x="3.00" y="21.90" font-family="Liberation Serif" font-size="3.3" font-weight="700" fill="#fff" opacity="1.0" textLength="44.00" lengthAdjust="spacingAndGlyphs">ЗАДАЧИ ИССЛЕДОВАНИЯ:</text>
<rect x="4.30" y="33.60" width="120.4" height="9.3" rx="1" fill="#d2d2d2" stroke="#6a6a6a" stroke-width="0.5"/>
<rect x="10.60" y="27.70" width="84" height="11.6" rx="1.5" fill="#fff" stroke="#555" stroke-width="0.5"/>
<text x="14.50" y="32.30" font-family="Liberation Sans" font-size="2.6" font-weight="400" fill="#444" opacity="1.0" textLength="66.10" lengthAdjust="spacingAndGlyphs">Определить место миостимуляции в подготовке</text>
<text x="14.50" y="35.90" font-family="Liberation Sans" font-size="2.6" font-weight="400" fill="#444" opacity="1.0" textLength="60.20" lengthAdjust="spacingAndGlyphs">специализации спортсменов в легкой атлетике.</text>
<rect x="4.30" y="50.90" width="120.4" height="9.3" rx="1" fill="#d2d2d2" stroke="#6a6a6a" stroke-width="0.5"/>
<rect x="10.60" y="45.50" width="84" height="11.6" rx="1.5" fill="#fff" stroke="#555" stroke-width="0.5"/>
<text x="14.50" y="49.10" font-family="Liberation Sans" font-size="2.6" font-weight="400" fill="#444" opacity="1.0" textLength="72.00" lengthAdjust="spacingAndGlyphs">Разработать методику тренировочных занятий с</text>
<text x="14.50" y="52.10" font-family="Liberation Sans" font-size="2.6" font-weight="400" fill="#444" opacity="1.0" textLength="74.50" lengthAdjust="spacingAndGlyphs">использованием упражнений на развитие силы мышц</text>
<text x="14.50" y="55.10" font-family="Liberation Sans" font-size="2.6" font-weight="400" fill="#444" opacity="1.0" textLength="60.20" lengthAdjust="spacingAndGlyphs">легкоатлетов и подбора миостимуляции.</text>
<rect x="4.30" y="68.30" width="120.4" height="9.3" rx="1" fill="#d2d2d2" stroke="#6a6a6a" stroke-width="0.5"/>
<rect x="10.60" y="62.70" width="84" height="11.6" rx="1.5" fill="#fff" stroke="#555" stroke-width="0.5"/>
<text x="14.50" y="67.30" font-family="Liberation Sans" font-size="2.6" font-weight="400" fill="#444" opacity="1.0" textLength="76.30" lengthAdjust="spacingAndGlyphs">Определить влияние миостимуляции на развитие силы</text>
<text x="14.50" y="70.90" font-family="Liberation Sans" font-size="2.6" font-weight="400" fill="#444" opacity="1.0" textLength="27.10" lengthAdjust="spacingAndGlyphs">мышц легкоатлетов.</text>
<rect x="4.30" y="85.30" width="120.4" height="9.3" rx="1" fill="#d2d2d2" stroke="#6a6a6a" stroke-width="0.5"/>
<rect x="10.60" y="79.70" width="84" height="11.6" rx="1.5" fill="#fff" stroke="#555" stroke-width="0.5"/>
<text x="14.50" y="84.30" font-family="Liberation Sans" font-size="2.6" font-weight="400" fill="#444" opacity="1.0" textLength="57.50" lengthAdjust="spacingAndGlyphs">Обобщить рекомендации по применению</text>
<text x="14.50" y="87.90" font-family="Liberation Sans" font-size="2.6" font-weight="400" fill="#444" opacity="1.0" textLength="49.10" lengthAdjust="spacingAndGlyphs">миостимуляции в легкой атлетике.</text>
</svg>
<svg class="a th" style="left:25px;top:459.7px" width="128" height="96" viewBox="0 0 128 96">
<defs><linearGradient id="tb4" x1="0" x2="1"><stop offset="0" stop-color="#2c2f6e"/><stop offset="0.2" stop-color="#2f3674"/><stop offset="0.52" stop-color="#4a6aa6"/><stop offset="0.8" stop-color="#2f3674"/><stop offset="1" stop-color="#2c2f6e"/></linearGradient><linearGradient id="thl4" x1="0" x2="1"><stop offset="0" stop-color="#6a6ab0" stop-opacity="0"/><stop offset="0.4" stop-color="#6a6ab0"/><stop offset="1" stop-color="#6a6ab0" stop-opacity="0"/></linearGradient></defs>
<rect x="0" y="0" width="128" height="96" fill="#fff"/>
<g transform="translate(4.6,5.6) scale(0.2078)"><g transform="translate(-299,-121)"><g fill="none" stroke="#3b3e8a"><path d="M317 121 H358.5 L338.6 154.6 H317 A16.8 16.8 0 0 1 317 121 Z" stroke-width="3.2"/><path d="M327 128 H316.5 A10 10 0 0 0 316.5 148 H326" stroke-width="2.4"/></g><path d="M322.8 123 H327.3 V141.5 H322.8 Z M338 123 L342.8 123 L327 149 C325 152.5 322 153.5 318.5 153.5 L319 151.2 C321.5 151 323 150 324.3 147.5 Z" fill="#3b3e8a"/></g></g>
<text x="39.00" y="7.00" font-family="Liberation Sans" font-size="1.8" font-weight="700" fill="#2b2e7a" opacity="1.0" textLength="85.00" lengthAdjust="spacingAndGlyphs">РОССИЙСКИЙ ГОСУДАРСТВЕННЫЙ УНИВЕРСИТЕТ ФИЗИЧЕСКОЙ КУЛЬТУРЫ, СПОРТА, МОЛОДЁЖИ И ТУРИЗМА</text>
<rect x="45" y="9.0" width="72" height="0.7" fill="url(#thl4)"/>
<rect x="0" y="16.60" width="128" height="8.60" fill="url(#tb4)"/>
<text x="3.00" y="21.90" font-family="Liberation Serif" font-size="3.3" font-weight="700" fill="#fff" opacity="1.0" textLength="44.00" lengthAdjust="spacingAndGlyphs">МЕТОДЫ ИССЛЕДОВАНИЯ:</text>
<rect x="16.80" y="34.50" width="110" height="9.7" fill="#fff" stroke="#6b8cc8" stroke-width="0.5"/>
<circle cx="11.30" cy="38.70" r="5.6" fill="#fff" stroke="#6b8cc8" stroke-width="0.5"/>
<circle cx="11.30" cy="38.70" r="3.6" fill="#222"/>
<path d="M8.5 36.799999999999955 h5.6 M8.299999999999997 38.69999999999993 h6 M8.5 40.59999999999991 h5.6" stroke="#ddd" stroke-width="0.5"/>
<text x="19.00" y="41.60" font-family="Liberation Sans" font-size="6" font-weight="400" fill="#222" opacity="1.0" textLength="106.00" lengthAdjust="spacingAndGlyphs">Анализ научно-методической литературы</text>
<path d="M5 29.299999999999955 L8 33.299999999999955 M15 44.799999999999955 L19 48.299999999999955 H127" stroke="#6b8cc8" stroke-width="0.5" fill="none"/>
</svg>
</div>
<div id="slide" class="a">
<svg class="a" style="left:0;top:0" width="616" height="462" viewBox="0 0 616 462">
<defs><linearGradient id="band" x1="0" y1="0" x2="1" y2="0"><stop offset="0" stop-color="#2c2f6e"/><stop offset="0.15" stop-color="#2c3070"/><stop offset="0.3" stop-color="#34427f"/><stop offset="0.43" stop-color="#4060a0"/><stop offset="0.53" stop-color="#4a6aa6"/><stop offset="0.64" stop-color="#4060a0"/><stop offset="0.74" stop-color="#34427f"/><stop offset="0.84" stop-color="#2c3070"/><stop offset="1" stop-color="#2c2f6e"/></linearGradient>
<linearGradient id="hl" x1="0" y1="0" x2="1" y2="0"><stop offset="0" stop-color="#6a6ab0" stop-opacity="0"/><stop offset="0.3" stop-color="#6a6ab0" stop-opacity="0.85"/><stop offset="0.75" stop-color="#6a6ab0" stop-opacity="0.7"/><stop offset="1" stop-color="#6a6ab0" stop-opacity="0"/></linearGradient></defs>
<g transform="translate(-277,-97)">
<g fill="none" stroke="#2b2e7a">
<path d="M317 121 H358.5 L338.6 154.6 H317 A16.8 16.8 0 0 1 317 121 Z" stroke-width="1.6"/>
<path d="M327 126.5 H316.5 A11.2 11.2 0 0 0 316.5 149 H326" stroke-width="0.8"/>
<path d="M327 130.5 H316.5 A7 7 0 0 0 316.5 144 H326" stroke-width="0.8"/>
<path d="M325 134.6 H316.5 A3 3 0 0 0 316.5 140 H325" stroke-width="0.8"/>
<path d="M328 132.6 H349.5 M327 143.3 H343.8" stroke-width="1"/>
</g>
<path d="M322.8 123 H326.3 V141.5 H322.8 Z" fill="#2b2e7a"/>
<path d="M338 123 L341.8 123 L327 149 C325 152.5 322 153.5 318.5 153.5 L319 151.2 C321.5 151 323 150 324.3 147.5 Z" fill="#2b2e7a"/>
</g>
<text x="189.6" y="30.3" font-family="Liberation Sans" font-weight="700" font-size="7.4" fill="#2b2e7a" textLength="405.8" lengthAdjust="spacingAndGlyphs">РОССИЙСКИЙ ГОСУДАРСТВЕННЫЙ УНИВЕРСИТЕТ ФИЗИЧЕСКОЙ КУЛЬТУРЫ, СПОРТА, МОЛОДЁЖИ И ТУРИЗМА</text>
<rect x="213" y="40.7" width="400" height="0.8" fill="url(#hl)"/>
<rect x="0" y="69.6" width="616" height="43.4" fill="url(#band)"/>
<text x="83" y="97.2" font-family="Liberation Serif" font-weight="700" font-size="15.4" fill="#fff" textLength="238.4" lengthAdjust="spacingAndGlyphs">РЕЗУЛЬТАТЫ ИССЛЕДОВАНИЯ</text>
<path d="M73 327.30 H592 M73 294.22 H592 M73 261.14 H592 M73 228.06 H592 M73 194.98 H592 M73 161.90 H592 M73 128.82 H592" stroke="#d9d9d9" stroke-width="1.1" fill="none"/>
<text x="60" y="331.40" text-anchor="end" font-family="Liberation Sans" font-size="11" fill="#595959" stroke="#595959" stroke-width="0.1" textLength="7.6" lengthAdjust="spacingAndGlyphs">0</text>
<text x="60" y="298.32" text-anchor="end" font-family="Liberation Sans" font-size="11" fill="#595959" stroke="#595959" stroke-width="0.1" textLength="15.7" lengthAdjust="spacingAndGlyphs">10</text>
<text x="60" y="265.24" text-anchor="end" font-family="Liberation Sans" font-size="11" fill="#595959" stroke="#595959" stroke-width="0.1" textLength="15.7" lengthAdjust="spacingAndGlyphs">20</text>
<text x="60" y="232.16" text-anchor="end" font-family="Liberation Sans" font-size="11" fill="#595959" stroke="#595959" stroke-width="0.1" textLength="15.7" lengthAdjust="spacingAndGlyphs">30</text>
<text x="60" y="199.08" text-anchor="end" font-family="Liberation Sans" font-size="11" fill="#595959" stroke="#595959" stroke-width="0.1" textLength="15.7" lengthAdjust="spacingAndGlyphs">40</text>
<text x="60" y="166.00" text-anchor="end" font-family="Liberation Sans" font-size="11" fill="#595959" stroke="#595959" stroke-width="0.1" textLength="15.7" lengthAdjust="spacingAndGlyphs">50</text>
<text x="60" y="132.92" text-anchor="end" font-family="Liberation Sans" font-size="11" fill="#595959" stroke="#595959" stroke-width="0.1" textLength="15.7" lengthAdjust="spacingAndGlyphs">60</text>
<path d="M24 212.2 H18.5 A2.4 2.4 0 0 0 18.5 216.6 M24 216.6 H16.5" fill="none" stroke="#595959" stroke-width="1.2" transform="translate(0,0)"/>
<rect x="93.90" y="288.10" width="18.4" height="39.20" fill="#4472c4"/>
<rect x="117.40" y="286.90" width="18.4" height="40.40" fill="#ed7d31"/>
<rect x="140.80" y="284.90" width="18.4" height="42.40" fill="#a5a5a5"/>
<rect x="164.30" y="278.30" width="18.4" height="49.00" fill="#ffc000"/>
<rect x="223.40" y="278.30" width="18.4" height="49.00" fill="#4472c4"/>
<rect x="246.90" y="275.10" width="18.4" height="52.20" fill="#ed7d31"/>
<rect x="270.30" y="271.90" width="18.4" height="55.40" fill="#a5a5a5"/>
<rect x="293.80" y="261.30" width="18.4" height="66.00" fill="#ffc000"/>
<rect x="353.00" y="202.00" width="18.4" height="125.30" fill="#4472c4"/>
<rect x="376.50" y="208.20" width="18.4" height="119.10" fill="#ed7d31"/>
<rect x="399.90" y="211.70" width="18.4" height="115.60" fill="#a5a5a5"/>
<rect x="423.40" y="184.70" width="18.4" height="142.60" fill="#ffc000"/>
<rect x="482.60" y="276.30" width="18.4" height="51.00" fill="#4472c4"/>
<rect x="506.10" y="278.30" width="18.4" height="49.00" fill="#ed7d31"/>
<rect x="529.50" y="275.10" width="18.4" height="52.20" fill="#a5a5a5"/>
<rect x="553.00" y="275.10" width="18.4" height="52.20" fill="#ffc000"/>
<path d="M103.10 268.40 V308.40 M99.50 268.40 H106.70 M99.50 308.40 H106.70 M126.60 268.40 V304.40 M123.00 268.40 H130.20 M123.00 304.40 H130.20 M150.00 268.40 V301.50 M146.40 268.40 H153.60 M146.40 301.50 H153.60 M173.50 255.90 V300.30 M169.90 255.90 H177.10 M169.90 300.30 H177.10 M232.60 258.00 V298.40 M229.00 258.00 H236.20 M229.00 298.40 H236.20 M256.10 256.60 V292.40 M252.50 256.60 H259.70 M252.50 292.40 H259.70 M279.50 254.80 V288.00 M275.90 254.80 H283.10 M275.90 288.00 H283.10 M303.00 239.80 V283.50 M299.40 239.80 H306.60 M299.40 283.50 H306.60 M362.20 181.50 V221.40 M358.60 181.50 H365.80 M358.60 221.40 H365.80 M385.70 190.30 V226.40 M382.10 190.30 H389.30 M382.10 226.40 H389.30 M409.10 195.50 V227.80 M405.50 195.50 H412.70 M405.50 227.80 H412.70 M432.60 163.30 V207.30 M429.00 163.30 H436.20 M429.00 207.30 H436.20 M491.80 256.30 V296.20 M488.20 256.30 H495.40 M488.20 296.20 H495.40 M515.30 259.90 V296.20 M511.70 259.90 H518.90 M511.70 296.20 H518.90 M538.70 258.00 V291.20 M535.10 258.00 H542.30 M535.10 291.20 H542.30 M562.20 252.70 V296.20 M558.60 252.70 H565.80 M558.60 296.20 H565.80" stroke="#595959" stroke-width="1.5" fill="none"/>
<text x="92.4" y="347.5" font-family="Liberation Sans" font-size="11.2" fill="#595959" stroke="#595959" stroke-width="0.25" textLength="90.7" lengthAdjust="spacingAndGlyphs">Подтягивания</text>
<text x="203.5" y="347.5" font-family="Liberation Sans" font-size="11.2" fill="#595959" stroke="#595959" stroke-width="0.25" textLength="127.6" lengthAdjust="spacingAndGlyphs">Подъем ног из виса</text>
<text x="359.9" y="347.5" font-family="Liberation Sans" font-size="11.2" fill="#595959" stroke="#595959" stroke-width="0.25" textLength="75.4" lengthAdjust="spacingAndGlyphs">Отжимания</text>
<text x="469.1" y="347.5" font-family="Liberation Sans" font-size="11.2" fill="#595959" stroke="#595959" stroke-width="0.25" textLength="116.2" lengthAdjust="spacingAndGlyphs">Прыжки на одной</text>
<text x="513.3" y="362.5" font-family="Liberation Sans" font-size="11.2" fill="#595959" stroke="#595959" stroke-width="0.25" textLength="27.8" lengthAdjust="spacingAndGlyphs">ноге</text>
<rect x="86.3" y="381.8" width="8.4" height="7.6" fill="#4472c4"/>
<text x="100.1" y="389.5" font-family="Liberation Sans" font-size="11.8" fill="#595959" stroke="#595959" stroke-width="0.25" textLength="77.4" lengthAdjust="spacingAndGlyphs">КГ до эксп.</text>
<rect x="200.9" y="381.8" width="8.4" height="7.6" fill="#ed7d31"/>
<text x="215" y="389.5" font-family="Liberation Sans" font-size="11.8" fill="#595959" stroke="#595959" stroke-width="0.25" textLength="101" lengthAdjust="spacingAndGlyphs">КГ после эксп.</text>
<rect x="339.5" y="381.8" width="8.4" height="7.6" fill="#a5a5a5"/>
<text x="353.7" y="389.5" font-family="Liberation Sans" font-size="11.8" fill="#595959" stroke="#595959" stroke-width="0.25" textLength="77.2" lengthAdjust="spacingAndGlyphs">ЭГ до эксп.</text>
<rect x="455" y="381.8" width="8.4" height="7.6" fill="#ffc000"/>
<text x="468" y="389.5" font-family="Liberation Sans" font-size="11.8" fill="#595959" stroke="#595959" stroke-width="0.25" textLength="100.7" lengthAdjust="spacingAndGlyphs">ЭГ после эксп.</text>
<text x="25.6" y="427.2" font-family="Liberation Serif" font-size="15.3" fill="#000" textLength="564.4" lengthAdjust="spacingAndGlyphs" xml:space="preserve">Рисунок 1.  Средние качественные результаты тестирования силы мышц исследуемых</text>
<text x="149" y="445.2" font-family="Liberation Serif" font-size="15.3" fill="#000" textLength="318.4" lengthAdjust="spacingAndGlyphs">спортсменов контрольной и экспериментальной.</text>
<text x="573.8" y="444" font-family="Liberation Sans" font-size="8.6" fill="#8c8c8c">9</text>
</svg>
</div>
<div class="a" style="left:167px;top:88px;width:12px;height:510px;background:#f0f0f0"></div>
<div class="a" style="left:167px;top:88px;width:12px;height:12px;background:#fff;border:1px solid #a9a9a9"></div>
<svg class="a" style="left:167px;top:88px" width="12" height="12"><path d="M3 7.5 L6 4.5 L9 7.5 Z" fill="#222"/></svg>
<div class="a" style="left:167px;top:99px;width:12px;height:183px;background:#fff;border:1px solid #a9a9a9"></div>
<div class="a" style="left:167px;top:586px;width:12px;height:11px;background:#fff;border:1px solid #a9a9a9"></div>
<svg class="a" style="left:167px;top:586px" width="12" height="11"><path d="M3 4 L6 7 L9 4 Z" fill="#222"/></svg>
<div class="a" style="left:179px;top:88px;width:2px;height:510px;background:#d9d9d9"></div>
<div class="a" style="left:988px;top:88px;width:12px;height:481px;background:#f0f0f0"></div>
<div class="a" style="left:988px;top:89px;width:11px;height:11px;background:#fff;border:1px solid #a9a9a9"></div>
<svg class="a" style="left:988px;top:89px" width="11" height="11"><path d="M2.5 7 L5.5 4 L8.5 7 Z" fill="#222"/></svg>
<div class="a" style="left:988px;top:380px;width:11px;height:33px;background:#fff;border:1px solid #a9a9a9"></div>
<div class="a" style="left:988px;top:520px;width:11px;height:11px;background:#fff;border:1px solid #a9a9a9"></div>
<svg class="a" style="left:988px;top:520px" width="11" height="11"><path d="M2.5 4 L5.5 7 L8.5 4 Z" fill="#222"/></svg>
<svg class="a" style="left:988px;top:533px" width="12" height="22"><path d="M2 6 L6 2 L10 6 Z M2 10 L6 6 L10 10 Z M2 12 L6 16 L10 12 Z M2 16 L6 20 L10 16 Z" fill="#555"/></svg>
<div class="a" style="left:893px;top:137.6px;width:19px;height:1px;background:#f6f6f6"></div>
<div id="notes" class="a"><div class="a" style="left:7.6px;top:5.2px;font-size:10.1px;color:#555;line-height:12px">Щелкните, чтобы добавить заметки</div></div>
<div id="sb" class="a">
<div class="st" style="left:4.8px;top:2.3px">Слайд 9 из 12</div>
<svg class="a" style="left:62px;top:1px" width="12" height="12"><path d="M1.5 2 H7 V10.5 H1.5 Z M7 2 H10.5 V10.5 H7" fill="none" stroke="#777" stroke-width="0.8"/><path d="M8 8 L10.8 4.2" stroke="#555" stroke-width="1"/></svg>
<div class="st" style="left:85px;top:2.3px">русский</div>
<svg class="a" style="left:122px;top:1px" width="12" height="13"><path d="M8.5 3.5 A4 4 0 1 0 9 8.5" fill="none" stroke="#555" stroke-width="1"/><path d="M6 8 L9.5 11.5 M9.5 8 L6 11.5 M9 1.5 V4.5 M7.5 3 H10.5" stroke="#555" stroke-width="0.9"/></svg>
<div class="st" style="left:134.7px;top:2.3px">Специальные возможности: проверьте рекомендации</div>
<svg class="a" style="left:632px;top:2px" width="10" height="11"><path d="M1 6.5 H9 M1 8.5 H9 M1 10 H9" stroke="#888" stroke-width="0.7"/><path d="M3 4.5 L5 2.5 L7 4.5 Z" fill="#777"/></svg>
<div class="st" style="left:644.3px;top:2.3px">Заметки</div>
<svg class="a" style="left:684px;top:2px" width="12" height="12"><path d="M1 1 H11 V8 H5 L3 10.5 V8 H1 Z" fill="#555"/></svg>
<div class="st" style="left:697.4px;top:2.3px">Примечания</div>
<div class="a" style="left:752px;top:0;width:27px;height:16px;background:#c6c6c6"></div>
<svg class="a" style="left:752px;top:0" width="27" height="16"><path d="M9 3.5 H18 V12.5 H9 Z M12 3.5 V12.5 M12 9 H18" fill="none" stroke="#777" stroke-width="0.8"/><path d="M13.5 5 H16.5 V7.5 H13.5 Z" fill="none" stroke="#888" stroke-width="0.6"/></svg>
<svg class="a" style="left:788px;top:2px" width="11" height="11"><path d="M1.5 1.5 H5 V5 H1.5 Z M6.5 1.5 H10 V5 H6.5 Z M1.5 6.5 H5 V10 H1.5 Z M6.5 6.5 H10 V10 H6.5 Z" fill="none" stroke="#888" stroke-width="0.7"/></svg>
<svg class="a" style="left:816px;top:2px" width="11" height="11"><path d="M1 1.5 H10 V10 H1 Z M5.5 1.5 V10 M2.2 3.5 H4.5 M2.2 5.5 H4.5 M6.5 3.5 H9 M6.5 5.5 H9" fill="none" stroke="#888" stroke-width="0.7"/></svg>
<svg class="a" style="left:844px;top:2px" width="11" height="12"><path d="M1 1.5 H10 M2 1.5 V7 H9 V1.5 M5.5 7 V10 M3.5 11 L5.5 9 L7.5 11" fill="none" stroke="#888" stroke-width="0.8"/></svg>
<div class="a" style="left:867px;top:7px;width:5px;height:1px;background:#888"></div>
<div class="a" style="left:875.5px;top:7px;width:69px;height:1px;background:#555"></div>
<div class="a" style="left:906px;top:3px;width:5px;height:9px;background:#444;border-radius:1px"></div>
<svg class="a" style="left:947px;top:2px" width="8" height="10"><path d="M1 5 H7 M4 2 V8" stroke="#777" stroke-width="0.8"/></svg>
<div class="st" style="left:961.5px;top:2.3px">93 %</div>
<svg class="a" style="left:988px;top:1px" width="11" height="12"><path d="M1 1 H10 V10.5 H1 Z M2.5 2.5 L4.5 4.5 M8.5 2.5 L6.5 4.5 M2.5 9 L4.5 7 M8.5 9 L6.5 7" fill="none" stroke="#888" stroke-width="0.7"/></svg>
<div class="a" style="left:0;top:14px;width:1000px;height:2px;background:#d9dccd"></div>
</div>
</body></html>
